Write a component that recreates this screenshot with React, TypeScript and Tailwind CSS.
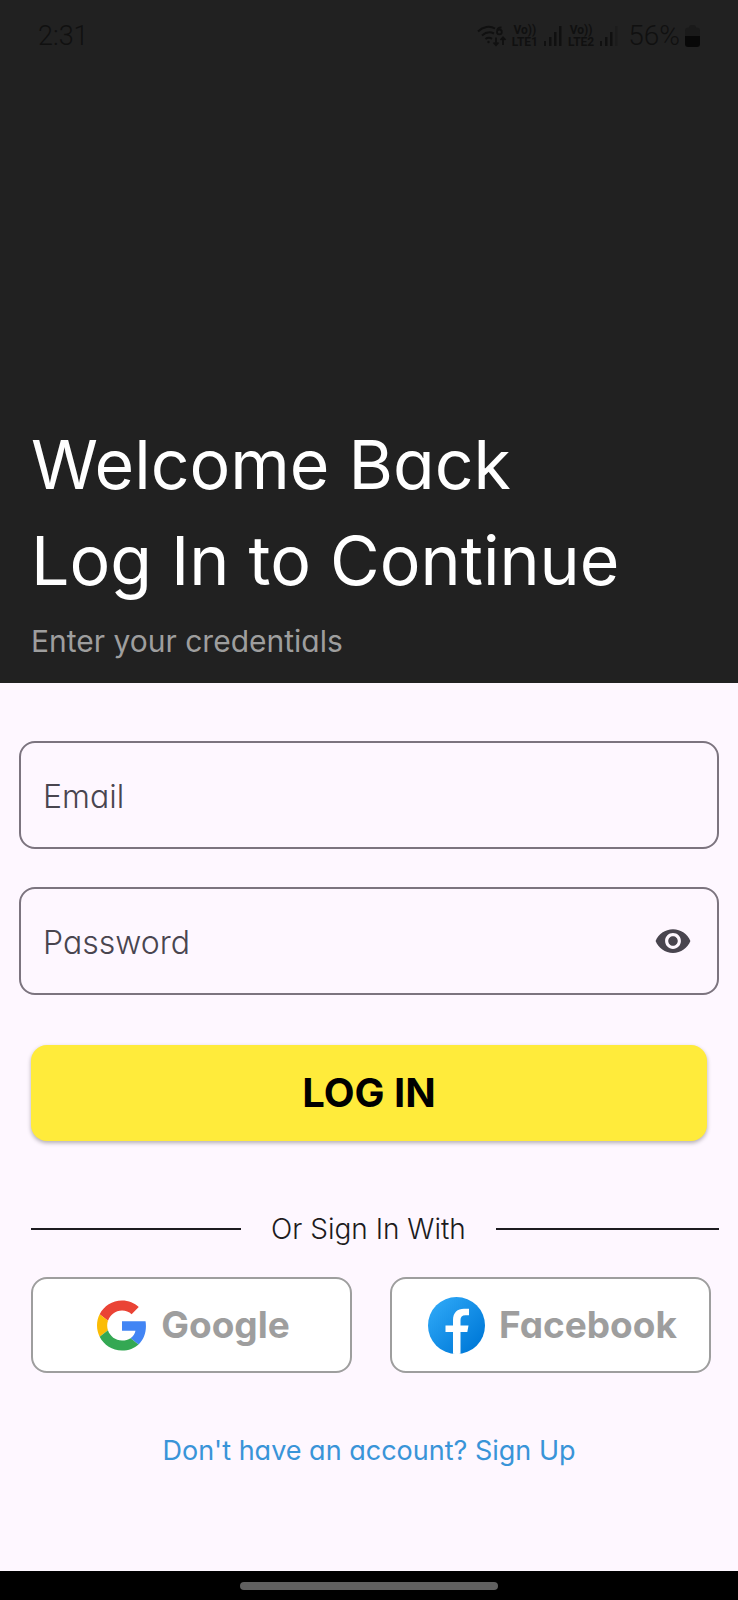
import { useState } from "react";

const WifiIcon = () => (
  <svg width="30" height="24" viewBox="0 0 30 24" fill="none" stroke="currentColor" strokeWidth="2" aria-hidden="true">
    <path d="M1 7.500C6 2.500 13 1.500 18 4.500M5 11.500c4-3.500 8-4 12-2M8.500 15c2-1.500 4.500-1.500 6.500-.2" />
    <circle cx="11.500" cy="18" r="1.200" fill="currentColor" stroke="none" />
    <path d="M24.500 3.500c-4 0-4.500 3-4.500 4.500a2.400 2.400 0 1 0 2.400-2.400c-1.200 0-2 .6-2.400 1.600" strokeWidth="1.800" />
    <path d="M19 13.500v7.500M16.500 18.500l2.500 2.700 2.500-2.700M26 21v-7.500M23.500 16l2.500-2.700L28.500 16" strokeWidth="1.800" />
  </svg>
);

const SignalIcon = ({ weak = false }: { weak?: boolean }) => (
  <svg width="20" height="20" viewBox="0 0 20 20" fill="currentColor" aria-hidden="true">
    <rect x="1" y="15" width="2" height="5" />
    <rect x="6" y="11" width="2.500" height="9" />
    <rect x="11" y="6" width="2.500" height="14" />
    <rect x="16" y="0" width="2.500" height="20" opacity={weak ? 0.3 : 1} />
  </svg>
);

const BatteryIcon = () => (
  <svg width="15" height="22" viewBox="0 0 15 22" aria-hidden="true">
    <path d="M4 2.500C4 1 5 0 6 0h3c1 0 2 1 2 2.500 3 0 4 1 4 3V11H0V5.500c0-2 1-3 4-3z" fill="#1a1a1a" />
    <path d="M0 11h15v8c0 2-1 3-3 3H3c-2 0-3-1-3-3z" fill="#080808" />
  </svg>
);

const LteLabel = ({ sim }: { sim: number }) => (
  <span className="flex flex-col items-center font-[Roboto,sans-serif] text-[12px] leading-none font-bold">
    <span>Vo))</span>
    <span>LTE{sim}</span>
  </span>
);

const EyeIcon = () => (
  <svg width="38" height="38" viewBox="0 0 24 24" fill="currentColor" aria-hidden="true">
    <path d="M12 4.500C7 4.500 2.730 7.610 1 12c1.730 4.390 6 7.500 11 7.500s9.270-3.110 11-7.500c-1.730-4.390-6-7.500-11-7.500zM12 17c-2.760 0-5-2.240-5-5s2.240-5 5-5 5 2.240 5 5-2.240 5-5 5zm0-8c-1.660 0-3 1.340-3 3s1.340 3 3 3 3-1.340 3-3-1.340-3-3-3z" />
  </svg>
);

const GoogleLogo = () => (
  <svg width="50" height="51" viewBox="0 0 48 48" aria-hidden="true">
    <path fill="#EA4335" d="M24 9.500c3.540 0 6.710 1.220 9.210 3.600l6.850-6.850C35.900 2.380 30.470 0 24 0 14.620 0 6.510 5.380 2.560 13.220l7.980 6.190C12.430 13.720 17.740 9.500 24 9.500z" />
    <path fill="#4285F4" d="M46.980 24.550c0-1.570-.15-3.090-.38-4.550H24v9.020h12.940c-.58 2.960-2.260 5.480-4.780 7.180l7.730 6c4.510-4.180 7.090-10.360 7.090-17.650z" />
    <path fill="#FBBC05" d="M10.530 28.590c-.48-1.450-.76-2.990-.76-4.590s.27-3.140.76-4.590l-7.980-6.190C.92 16.460 0 20.120 0 24c0 3.880.92 7.540 2.560 10.780l7.970-6.190z" />
    <path fill="#34A853" d="M24 48c6.480 0 11.930-2.130 15.890-5.810l-7.730-6c-2.150 1.450-4.920 2.300-8.160 2.300-6.260 0-11.570-4.220-13.470-9.910l-7.980 6.190C6.510 42.620 14.620 48 24 48z" />
  </svg>
);

const FacebookLogo = () => (
  <svg width="57" height="57" viewBox="0 0 57 57" aria-hidden="true">
    <defs>
      <linearGradient id="fb" x1="8" y1="8" x2="49" y2="49" gradientUnits="userSpaceOnUse">
        <stop stopColor="#2AA4F4" />
        <stop offset="1" stopColor="#007AD9" />
      </linearGradient>
    </defs>
    <circle cx="28.500" cy="28.500" r="28.500" fill="url(#fb)" />
    <path fill="#fff" d="M25 56.800V35h-7.500v-6.500H25v-5.500c0-7.500 4.500-11.300 11-11.300h5v6.600h-3.500c-3.500 0-5 1.800-5 4.700v5.500h8l-1.200 6.500h-6.800v21.800a28.500 28.500 0 0 1-7.500 0z" />
  </svg>
);

const fieldBox = "flex h-[108px] items-center rounded-2xl border-2 border-[#7c747f] pr-[25px] pl-[22px] focus-within:border-[#4f4657]";
const fieldInput = "min-w-0 flex-1 bg-transparent pt-1 text-[32px] font-light text-[#49454f] outline-none placeholder:text-[#49454f] placeholder:opacity-100";
const socialButton = "flex h-24 flex-1 items-center justify-center gap-[14px] rounded-2xl border-2 border-[#9e9e9e] bg-white pl-1 text-[37px] font-bold text-[#9e9e9e]";

export default function App() {
  const [visible, setVisible] = useState(false);

  return (
    <div className="flex min-h-screen flex-col bg-[#fef7ff] font-[Inter,sans-serif] [font-feature-settings:'cv11']">
      <header className="flex flex-col bg-[#212121] pb-5">
        <div className="flex h-[72px] items-center justify-between px-[38px] font-[Roboto,sans-serif] text-[#101010]">
          <span className="text-[27px] font-light">2:31</span>
          <div className="flex items-center gap-[5px]">
            <WifiIcon />
            <LteLabel sim={1} />
            <SignalIcon />
            <LteLabel sim={2} />
            <SignalIcon weak />
            <span className="pl-1 text-[28px] font-light">56%</span>
            <BatteryIcon />
          </div>
        </div>
        <div className="px-[31px] pt-[344px]">
          <h1 className="text-[68px] leading-[96px] text-white">
            Welcome Back
            <br />
            Log In to Continue
          </h1>
          <p className="mt-[11px] text-[30px] leading-[44px] text-[#9e9e9e]">Enter your credentials</p>
        </div>
      </header>

      <main className="flex flex-1 flex-col px-[19px] pt-[58px]">
        <form className="flex flex-col" onSubmit={(e) => e.preventDefault()}>
          <div className="flex flex-col gap-[38px]">
            <div className={fieldBox}>
              <input type="email" aria-label="Email" placeholder="Email" className={fieldInput} />
            </div>
            <div className={fieldBox}>
              <input type={visible ? "text" : "password"} aria-label="Password" placeholder="Password" className={fieldInput} />
              <button type="button" aria-label="Show password" onClick={() => setVisible(!visible)} className="text-[#49454f]">
                <EyeIcon />
              </button>
            </div>
          </div>
          <button type="submit" className="mx-3 mt-[50px] h-24 rounded-2xl bg-[#ffeb3b] text-[40px] font-bold text-black shadow-[0_2px_4px_rgba(0,0,0,0.3)]">
            LOG IN
          </button>
        </form>

        <div className="mt-[68px] ml-3 flex items-center gap-[30px]">
          <span className="h-0.5 flex-[16] bg-[#1d1b20]" />
          <span className="text-[28px] leading-10 font-light text-[#1d1b20]">Or Sign In With</span>
          <span className="h-0.5 flex-[17] bg-[#1d1b20]" />
        </div>

        <div className="mt-7 mr-2 ml-3 flex gap-[38px]">
          <button type="button" className={socialButton}>
            <GoogleLogo />
            Google
          </button>
          <button type="button" className={socialButton}>
            <FacebookLogo />
            Facebook
          </button>
        </div>

        <a href="#signup" className="mt-[58px] self-center text-[27px] leading-10 text-[#3994d8]">
          Don't have an account? Sign Up
        </a>
      </main>

      <footer className="flex h-[29px] items-center justify-center bg-black">
        <span className="h-2 w-[258px] rounded-full bg-[#606060]" />
      </footer>
    </div>
  );
}
